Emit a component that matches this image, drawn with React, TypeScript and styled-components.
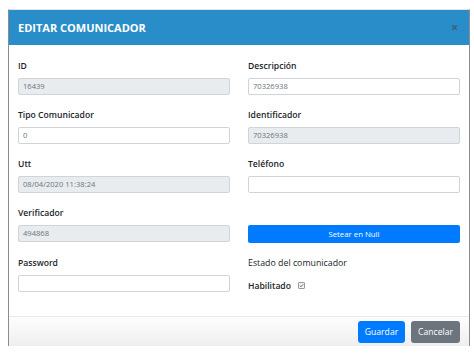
import React from "react";
import styled, { createGlobalStyle } from "styled-components";

const Global = createGlobalStyle`
  html, body { margin: 0; padding: 0; background: #fff; }
  body { font-family: "Open Sans", "Noto Sans", sans-serif; }
  * { box-sizing: border-box; }
`;

const Modal = styled.div`
  margin: 9px 0 0 8px;
  width: 462px;
  border-top: 1px solid #e2e2e2;
  border-left: 1px solid #8c8c8c;
  border-right: 1px solid #8c8c8c;
  background: #fff;
`;

const Header = styled.div`
  height: 35px;
  background: #288dc9;
  display: flex;
  align-items: center;
  justify-content: space-between;
  padding: 0 9px;
`;

const Title = styled.h5`
  margin: 0;
  color: #fff;
  font-size: 11px;
  font-weight: 700;
  letter-spacing: 0;
`;

const Close = styled.span`
  color: #3f5f76;
  font-size: 12px;
  font-weight: 700;
  line-height: 1;
  margin-right: 2px;
`;

const Body = styled.div`
  padding: 15px 9px 24px;
  display: grid;
  grid-template-columns: 212px 212px;
  column-gap: 18px;
  row-gap: 14px;
`;

const Field = styled.div`
  display: flex;
  flex-direction: column;
`;

const Label = styled.label<{ $weight?: number }>`
  height: 12px;
  line-height: 12px;
  font-size: ${(p) => (p.$weight === 400 ? "8.8px" : "8.6px")};
  font-weight: ${(p) => p.$weight ?? 600};
  color: #212529;
  margin-bottom: 6px;
  white-space: nowrap;
`;

const Input = styled.div<{ $disabled?: boolean }>`
  height: 17px;
  border: 1px solid #ced4da;
  border-radius: 2px;
  background: ${(p) => (p.$disabled ? "#e9ecef" : "#fff")};
  color: #6b747c;
  font-size: 7.6px;
  line-height: 15px;
  padding: 0 4px;
  white-space: nowrap;
`;

const WideButton = styled.button`
  height: 18px;
  border: none;
  border-radius: 2px;
  background: #007bff;
  color: #fff;
  font-family: inherit;
  font-size: 7.8px;
  padding: 0;
  width: 100%;
`;

const CheckRow = styled.div`
  display: flex;
  align-items: center;
  gap: 7px;
  height: 17px;
  padding-top: 4px;
`;

const CheckLabel = styled.span`
  font-size: 8.6px;
  font-weight: 600;
  color: #212529;
`;

const Box = styled.span`
  width: 7px;
  height: 7px;
  border: 1px solid #9a9a9a;
  border-radius: 1px;
  background: #f4f4f4;
  display: flex;
  align-items: center;
  justify-content: center;
`;

const Footer = styled.div`
  height: 30px;
  border-top: 1px solid #e6eaea;
  background: linear-gradient(#fdfdfd, #efefef);
  display: flex;
  justify-content: flex-end;
  align-items: center;
  gap: 6px;
  padding: 0 9px;
`;

const Btn = styled.button<{ $variant: "primary" | "secondary"; $w: number }>`
  height: 22px;
  width: ${(p) => p.$w}px;
  border: none;
  border-radius: 3px;
  background: ${(p) => (p.$variant === "primary" ? "#007bff" : "#6c757d")};
  color: #fff;
  font-family: inherit;
  font-size: 8.6px;
  padding: 0;
`;

const fields = [
  { left: { label: "ID", value: "16439", disabled: true }, right: { label: "Descripción", value: "70326938", disabled: false } },
  { left: { label: "Tipo Comunicador", value: "0", disabled: false }, right: { label: "Identificador", value: "70326938", disabled: true } },
  { left: { label: "Utt", value: "08/04/2020 11:38:24", disabled: true }, right: { label: "Teléfono", value: "", disabled: false } },
];

export default function App() {
  return (
    <>
      <Global />
      <Modal>
        <Header>
          <Title>EDITAR COMUNICADOR</Title>
          <Close>×</Close>
        </Header>
        <Body>
          {fields.map((row) => (
            <React.Fragment key={row.left.label}>
              <Field>
                <Label>{row.left.label}</Label>
                <Input $disabled={row.left.disabled}>{row.left.value}</Input>
              </Field>
              <Field>
                <Label>{row.right.label}</Label>
                <Input $disabled={row.right.disabled}>{row.right.value}</Input>
              </Field>
            </React.Fragment>
          ))}
          <Field>
            <Label>Verificador</Label>
            <Input $disabled>494868</Input>
          </Field>
          <Field>
            <Label>&nbsp;</Label>
            <WideButton>Setear en Null</WideButton>
          </Field>
          <Field>
            <Label>Password</Label>
            <Input />
          </Field>
          <Field>
            <Label $weight={400}>Estado del comunicador</Label>
            <CheckRow>
              <CheckLabel>Habilitado</CheckLabel>
              <Box>
                <svg width="5" height="5" viewBox="0 0 10 10">
                  <path d="M1.5 5.2 L4 7.6 L8.6 2.2" fill="none" stroke="#555" strokeWidth="1.6" />
                </svg>
              </Box>
            </CheckRow>
          </Field>
        </Body>
        <Footer>
          <Btn $variant="primary" $w={47}>Guardar</Btn>
          <Btn $variant="secondary" $w={49}>Cancelar</Btn>
        </Footer>
      </Modal>
    </>
  );
}
